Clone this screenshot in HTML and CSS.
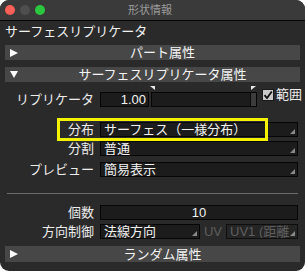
FILE: index.html
```html
<!DOCTYPE html>
<html lang="ja">
<head>
    <meta charset="UTF-8">
    <title>形状情報</title>
    <link rel="stylesheet" href="styles.css">
</head>
<body>
    <div class="window">
        <div class="titlebar">
            <div class="lights">
                <span class="light red"></span>
                <span class="light gray"></span>
                <span class="light green"></span>
            </div>
            <div class="title">形状情報</div>
        </div>

        <div class="content">
            <div class="objname">サーフェスリプリケータ</div>

            <div class="section bar-part">
                <span class="arrow"><svg width="8" height="8" viewBox="0 0 8 8"><polygon points="0,0 8,4 0,8" fill="#fff"/></svg></span>
                <span class="section-title">パート属性</span>
            </div>

            <div class="section bar-surface">
                <span class="arrow"><svg width="8" height="7" viewBox="0 0 8 7"><polygon points="0,0 8,0 4,7" fill="#fff"/></svg></span>
                <span class="section-title">サーフェスリプリケータ属性</span>
            </div>

            <div class="row row-replicator">
                <span class="label">リプリケータ</span>
                <div class="field num">1.00</div>
                <div class="slider">
                    <svg class="marker marker-left" width="5" height="4" viewBox="0 0 5 4"><polygon points="0,0 5,0 5,4" fill="#e8e8e8"/></svg>
                    <svg class="marker marker-right" width="5" height="4" viewBox="0 0 5 4"><polygon points="0,0 5,0 0,4" fill="#e8e8e8"/></svg>
                    <span class="thumb"></span>
                </div>
                <div class="range">
                    <span class="check"><svg width="10" height="10" viewBox="0 0 10 10"><path d="M1.5 5.2 L4 8 L8.8 1.5" fill="none" stroke="#111" stroke-width="1.8"/></svg></span>
                    <span class="check-label">範囲</span>
                </div>
            </div>

            <div class="row row-dist">
                <span class="label">分布</span>
                <div class="field dropdown">
                    <span class="value">サーフェス（一様分布）</span>
                    <svg class="dd-arrow" width="5" height="5" viewBox="0 0 5 5"><polygon points="5,0 5,5 0,5" fill="#8a8a8a"/></svg>
                </div>
                <div class="highlight"></div>
            </div>

            <div class="row row-split">
                <span class="label">分割</span>
                <div class="field dropdown">
                    <span class="value">普通</span>
                    <svg class="dd-arrow" width="5" height="5" viewBox="0 0 5 5"><polygon points="5,0 5,5 0,5" fill="#8a8a8a"/></svg>
                </div>
            </div>

            <div class="row row-preview">
                <span class="label">プレビュー</span>
                <div class="field dropdown">
                    <span class="value">簡易表示</span>
                    <svg class="dd-arrow" width="5" height="5" viewBox="0 0 5 5"><polygon points="5,0 5,5 0,5" fill="#8a8a8a"/></svg>
                </div>
            </div>

            <div class="separator"></div>

            <div class="row row-count">
                <span class="label">個数</span>
                <div class="field center">10</div>
            </div>

            <div class="row row-direction">
                <span class="label">方向制御</span>
                <div class="field dropdown dir">
                    <span class="value">法線方向</span>
                    <svg class="dd-arrow" width="5" height="5" viewBox="0 0 5 5"><polygon points="5,0 5,5 0,5" fill="#8a8a8a"/></svg>
                </div>
                <span class="uv-label">UV</span>
                <div class="field dropdown disabled">
                    <span class="value">UV1 (距離</span>
                    <svg class="dd-arrow" width="5" height="5" viewBox="0 0 5 5"><polygon points="5,0 5,5 0,5" fill="#8a8a8a"/></svg>
                </div>
            </div>

            <div class="section bar-random">
                <span class="arrow"><svg width="8" height="8" viewBox="0 0 8 8"><polygon points="0,0 8,4 0,8" fill="#fff"/></svg></span>
                <span class="section-title">ランダム属性</span>
            </div>
        </div>
    </div>
</body>
</html>
```

FILE: styles.css
```css
html, body {
    margin: 0;
    padding: 0;
    background: #fff;
}

body {
    font-family: "Liberation Sans", "Noto Sans CJK JP", sans-serif;
    font-size: 13px;
    color: #ececec;
}

.window {
    width: 305px;
    height: 271px;
    background: #2a2a2a;
    border-radius: 9px;
    overflow: hidden;
    box-sizing: border-box;
}

/* タイトルバー */
.titlebar {
    height: 20px;
    background: #3a3a3a;
    border-bottom: 1px solid #050505;
    display: flex;
    align-items: center;
}

.lights {
    display: flex;
    gap: 5px;
    padding-left: 5px;
}

.light {
    width: 10px;
    height: 10px;
    border-radius: 50%;
}

.light.red { background: #fe5f57; }
.light.gray { background: #4e4e4e; }
.light.green { background: #2ac73f; }

.title {
    flex: 1;
    text-align: center;
    margin-right: 50px;
    font-size: 11px;
    color: #9c9c9c;
    line-height: 20px;
}

.content {
    padding: 0 5px;
}

.objname {
    height: 22px;
    line-height: 22px;
    color: #f2f2f2;
}

/* セクションバー */
.section {
    display: flex;
    align-items: center;
    height: 15px;
    background: #474747;
}

.section .arrow {
    width: 20px;
    display: flex;
    justify-content: flex-start;
    padding-left: 5px;
    box-sizing: border-box;
}

.section .arrow svg { display: block; }

.section-title {
    flex: 1;
    text-align: center;
    line-height: 15px;
    color: #f4f4f4;
}

.bar-part { margin-top: 2px; }
.bar-surface { margin-top: 7px; }
.bar-random { margin-top: 7px; height: 16px; }

/* 行 */
.row {
    display: flex;
    align-items: center;
    height: 15px;
    padding-right: 2px;
    position: relative;
}

.label {
    width: 89px;
    flex: none;
    text-align: right;
    margin-right: 6px;
    line-height: 15px;
    color: #ececec;
    white-space: nowrap;
}

.field {
    height: 15px;
    box-sizing: border-box;
    background: #1c1c1c;
    border: 1px solid #060606;
    line-height: 13px;
    color: #f2f2f2;
    flex: 1;
    display: flex;
    white-space: nowrap;
    overflow: hidden;
}

.field.num {
    flex: none;
    width: 49px;
    justify-content: flex-end;
    padding-right: 2px;
}

.field.center {
    justify-content: center;
}

.dropdown {
    padding-left: 3px;
}

.dropdown .value {
    flex: 1;
    overflow: hidden;
}

.dd-arrow {
    align-self: flex-end;
    margin: 0 2px 2px 0;
    flex: none;
}

.row-replicator { margin-top: 10px; padding-right: 0; }
.row-dist { margin-top: 15px; }
.row-split { margin-top: 4px; }
.row-preview { margin-top: 6px; }
.row-count { margin-top: 11px; }
.row-direction { margin-top: 4px; }

.slider {
    position: relative;
    flex: none;
    width: 106px;
    height: 15px;
    margin-left: 2px;
    box-sizing: border-box;
    background: #1c1c1c;
    border: 1px solid #060606;
    display: flex;
    justify-content: flex-end;
}

.slider .thumb {
    width: 5px;
    background: #3c3c3c;
    border-left: 1px solid #0a0a0a;
}

.marker {
    position: absolute;
    top: -7px;
    display: block;
}

.marker-left { left: -2px; }
.marker-right { right: 0; }

.range {
    display: flex;
    flex: none;
    align-items: center;
    align-self: flex-start;
    margin-top: -4px;
    margin-left: 5px;
    white-space: nowrap;
}

.check {
    width: 12px;
    height: 12px;
    flex: none;
    box-sizing: border-box;
    background: #c9c9c9;
    border: 1px solid #1a1a1a;
    display: flex;
    align-items: center;
    justify-content: center;
}

.check svg { display: block; }

.check-label {
    margin-left: 2px;
    line-height: 14px;
    color: #ececec;
}

/* 黄色の注釈枠 */
.highlight {
    position: absolute;
    left: 52px;
    top: -4px;
    width: 211px;
    height: 23px;
    box-sizing: border-box;
    border: 3px solid #f3f300;
}

.separator {
    height: 1px;
    background: #6c6c6c;
    margin: 16px 2px 0 2px;
}

.field.dir {
    flex: none;
    width: 100px;
}

.uv-label {
    width: 26px;
    flex: none;
    text-align: center;
    color: #5e5e5e;
    line-height: 15px;
}

.field.disabled {
    background: #252525;
    border-color: #0e0e0e;
    color: #5e5e5e;
}
```
